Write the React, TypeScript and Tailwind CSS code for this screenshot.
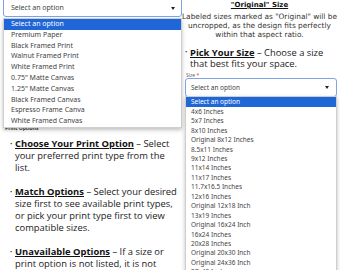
const printOptions = [
  'Select an option',
  'Premium Paper',
  'Black Framed Print',
  'Walnut Framed Print',
  'White Framed Print',
  '0.75" Matte Canvas',
  '1.25" Matte Canvas',
  'Black Framed Canvas',
  'Espresso Frame Canva',
  'White Framed Canvas',
]

const sizes = [
  'Select an option',
  '4x6 Inches',
  '5x7 Inches',
  '8x10 Inches',
  'Original 8x12 Inches',
  '8.5x11 Inches',
  '9x12 Inches',
  '11x14 Inches',
  '11x17 Inches',
  '11.7x16.5 Inches',
  '12x16 Inches',
  'Original 12x18 Inch',
  '13x19 Inches',
  'Original 16x24 Inch',
  '16x24 Inches',
  '20x28 Inches',
  'Original 20x30 Inch',
  'Original 24x36 Inch',
  '27x40 Inches',
]

function Caret() {
  return <span className="w-0 h-0 border-l-[2.5px] border-r-[2.5px] border-t-[3px] border-l-transparent border-r-transparent border-t-[#222]" />
}

// lines are broken by hand so the wrap matches the page
function Bullet({ title, first, rest }: { title: string; first: string; rest: string[] }) {
  return (
    <li className="flex">
      <span className="w-[5px] shrink-0 text-[6px] text-[#222]">•</span>
      <p className="whitespace-nowrap">
        <span className="font-bold underline underline-offset-[1px] text-[#111]">{title}</span>
        {'  '}– {first}
        {rest.map((l) => (
          <span key={l}>
            <br />
            {l}
          </span>
        ))}
      </p>
    </li>
  )
}

export default function App() {
  return (
    <div className="relative w-[340px] h-[270px] overflow-hidden bg-white font-['Open_Sans',sans-serif] text-[#222]">
      <div className="grid grid-cols-[182px_1fr]">
        {/* Left: print option */}
        <div className="flex flex-col">
          <div className="relative ml-[3px] -mt-[3px] z-20">
            <div className="h-[20px] border border-[#7ea4e6] rounded-[3px] flex items-center justify-between pl-[7px] pr-[6px] pt-[3px] bg-white">
              <span className="font-['Noto_Sans',sans-serif] text-[7px] text-[#444]">Select an option</span>
              <Caret />
            </div>
            <ul className="absolute top-[21px] left-0 right-0 bg-white border border-[#cfcfcf] shadow-[0_2px_4px_rgba(0,0,0,0.25)] font-['Noto_Sans',sans-serif] text-[7px] text-[#444]">
              {printOptions.map((o, i) => (
                <li key={o} className={`h-[10.8px] leading-[10.8px] pl-[7px] ${i === 0 ? 'bg-[#1f66d8] text-white' : ''}`}>{o}</li>
              ))}
            </ul>
          </div>
          <div className="mt-[108px] ml-[5px] text-[5px] font-bold text-[#444] leading-[6px]">Print Options</div>
          <ul className="pl-[10px] mt-[7px] text-[9.4px] leading-[12px] flex flex-col gap-[12px]">
            <Bullet title="Choose Your Print Option" first="Select" rest={['your preferred print type from the', 'list.']} />
            <Bullet
              title="Match Options"
              first="Select your desired"
              rest={['size first to see available print types,', 'or pick your print type first to view', 'compatible sizes.']}
            />
            <Bullet title="Unavailable Options" first=" If a size or" rest={['print option is not listed, it is not', 'available.']} />
          </ul>
        </div>

        {/* Right: size */}
        <div className="flex flex-col pr-[4px]">
          <div className="text-center pt-[1px] font-['DejaVu_Sans',sans-serif]">
            <div className="text-[7px] font-bold underline leading-[9px] text-[#111]">"Original" Size</div>
            <p className="text-[7.4px] leading-[8.8px] mt-[3px] text-[#333] whitespace-nowrap">
              Labeled sizes marked as "Original" will be
              <br />
              uncropped, as the design fits perfectly
              <br />
              within that aspect ratio.
            </p>
          </div>
          <ul className="mt-[8px] pl-[3px] text-[9.4px] leading-[11px]">
            <Bullet title="Pick Your Size" first="Choose a size" rest={['that best fits your space.']} />
          </ul>
          <div className="mt-[3px] ml-[4px] text-[5px] leading-[6px] text-[#555]">Size <span className="text-[#d22]">*</span></div>
          <div className="relative ml-[3px] z-20">
            <div className="h-[19px] border border-[#7ea4e6] rounded-[3px] flex items-center justify-between pl-[5px] pr-[7px] bg-white">
              <span className="font-['Noto_Sans',sans-serif] text-[6.5px] text-[#444]">Select an option</span>
              <Caret />
            </div>
            <ul className="absolute top-[18px] left-0 right-0 bg-white border border-[#cfcfcf] shadow-[0_2px_4px_rgba(0,0,0,0.25)] font-['Noto_Sans',sans-serif] text-[6.5px] text-[#444]">
              {sizes.map((s, i) => (
                <li key={s} className={`h-[9.45px] leading-[9.45px] pl-[5px] ${i === 0 ? 'bg-[#1f66d8] text-white' : ''}`}>{s}</li>
              ))}
            </ul>
          </div>
        </div>
      </div>
    </div>
  )
}
